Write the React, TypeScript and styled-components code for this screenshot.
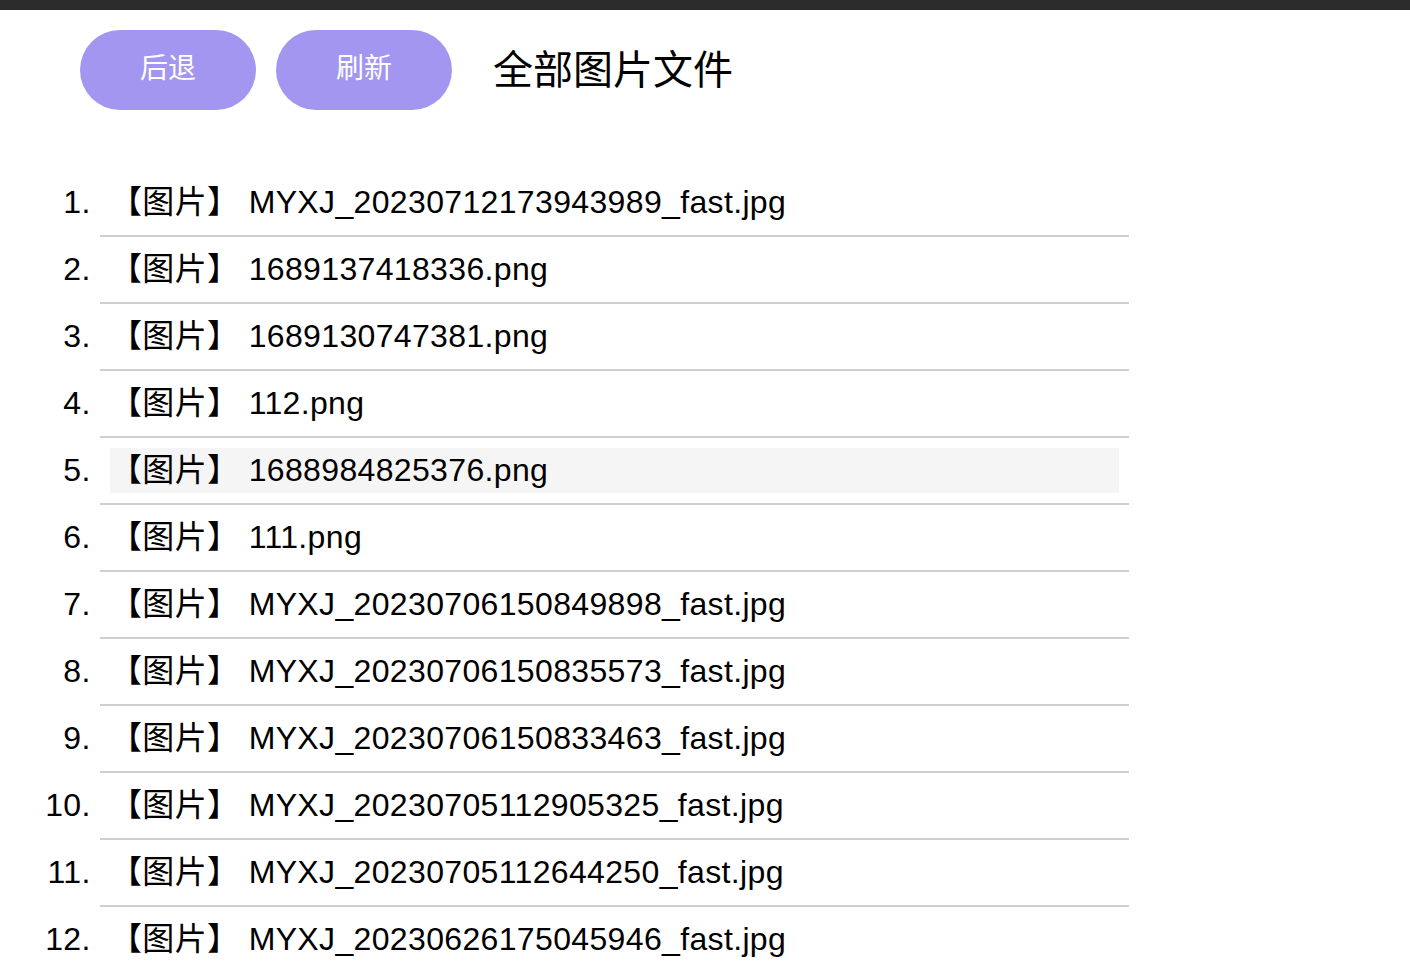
import React from "react";
import styled, { createGlobalStyle } from "styled-components";

const GlobalStyle = createGlobalStyle`
  html, body {
    margin: 0;
    padding: 0;
    background: #ffffff;
    font-family: "Liberation Sans", "Noto Sans CJK SC", sans-serif;
    color: #000;
  }
`;

const TopBar = styled.div`
  height: 10px;
  background: #2c2c2c;
`;

const Header = styled.header`
  display: flex;
  align-items: center;
  gap: 20px;
  padding: 20px 80px;
`;

const PillButton = styled.button`
  width: 176px;
  height: 80px;
  border: none;
  border-radius: 40px;
  background: #a396f1;
  color: #ffffff;
  font-family: "Liberation Sans", "Noto Sans CJK SC", sans-serif;
  font-size: 28px;
  line-height: 78px;
  cursor: pointer;
  padding: 0 0 2px 0;
`;

const Title = styled.h1`
  margin: 0 0 0 21px;
  font-size: 40px;
  font-weight: 400;
  line-height: 80px;
  color: #000;
`;

const FileList = styled.ol`
  margin: 40px 0 0 0;
  padding: 0 0 0 100px;
  width: 1129px;
  box-sizing: border-box;
  list-style: decimal;
`;

const FileItem = styled.li`
  padding: 10px;
  border-bottom: 2px solid #cfcfcf;
  font-size: 32px;
  letter-spacing: 0.35px;
`;

const FileLabel = styled.div<{ $active?: boolean }>`
  height: 45px;
  line-height: 45px;
  white-space: nowrap;
  background: ${(p) => (p.$active ? "#f5f5f5" : "transparent")};
`;

const files = [
  "MYXJ_20230712173943989_fast.jpg",
  "1689137418336.png",
  "1689130747381.png",
  "112.png",
  "1688984825376.png",
  "111.png",
  "MYXJ_20230706150849898_fast.jpg",
  "MYXJ_20230706150835573_fast.jpg",
  "MYXJ_20230706150833463_fast.jpg",
  "MYXJ_20230705112905325_fast.jpg",
  "MYXJ_20230705112644250_fast.jpg",
  "MYXJ_20230626175045946_fast.jpg",
];

export default function App() {
  return (
    <>
      <GlobalStyle />
      <TopBar />
      <Header>
        <PillButton>后退</PillButton>
        <PillButton>刷新</PillButton>
        <Title>全部图片文件</Title>
      </Header>
      <FileList>
        {files.map((f, i) => (
          <FileItem key={f}>
            <FileLabel $active={i === 4}>【图片】 {f}</FileLabel>
          </FileItem>
        ))}
      </FileList>
    </>
  );
}
